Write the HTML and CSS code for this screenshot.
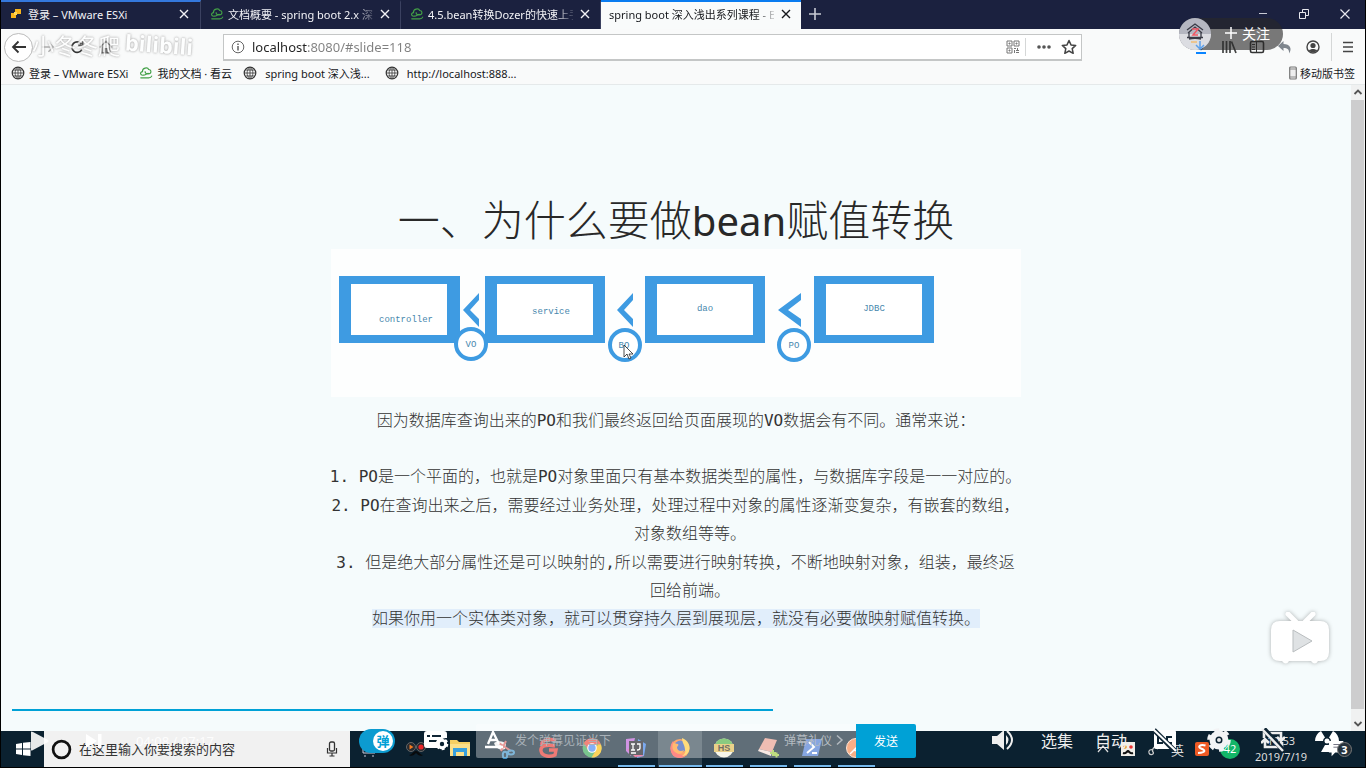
FILE: index.html
```html
<!DOCTYPE html>
<html lang="zh-CN">
<head>
<meta charset="utf-8">
<title>spring boot 深入浅出系列课程</title>
<link rel="stylesheet" href="styles.css">
</head>
<body>
<svg class="defs" aria-hidden="true">
  <symbol id="globe" viewBox="0 0 16 16"><circle cx="8" cy="8" r="6.6" fill="none" stroke="#333" stroke-width="1.4"/><path d="M8 1.4v13.2M1.4 8h13.2M2.6 4.6h10.8M2.6 11.4h10.8M8 1.4C3.6 5 3.6 11 8 14.6M8 1.4c4.400 3.600 4.400 9.600 0 13.200" fill="none" stroke="#444"/></symbol>
  <symbol id="cloud" viewBox="0 0 16 16"><path d="M5 10.500C1 11 .8 6.500 4 6.500 3.500 2 10 1 11 4c3.500 0 3.600 5-.5 5C8 9 7 8.500 7 6.500M5 10.500c3 0 3.500-2.500 6-2M2 13.500h9c2 0 3-.5 3.500-2" fill="none" stroke="#43a047" stroke-width="1.300" stroke-linecap="round"/></symbol>
  <symbol id="close" viewBox="0 0 12 12"><path d="M2 2l8 8M10 2l-8 8" stroke="currentColor" stroke-width="1.4" fill="none"/></symbol>
</svg>
<div class="screen">
  <header class="tabs">
    <div class="tab tab-first"><svg class="i12" viewBox="0 0 12 12"><path d="M5 1h6v5H5zM1 5h5v5H1z" fill="#f9b51b"/><path d="M4 4h3v3H4z" fill="#ffd75a"/></svg><span class="tab-title">登录 – VMware ESXi</span><button class="x" aria-label="关闭"><svg class="i12"><use href="#close"/></svg></button></div>
    <div class="tab"><svg class="i14"><use href="#cloud"/></svg><span class="tab-title fade">文档概要 - spring boot 2.x 深</span><button class="x" aria-label="关闭"><svg class="i12"><use href="#close"/></svg></button></div>
    <div class="tab"><svg class="i14"><use href="#cloud"/></svg><span class="tab-title fade">4.5.bean转换Dozer的快速上手</span><button class="x" aria-label="关闭"><svg class="i12"><use href="#close"/></svg></button></div>
    <div class="tab active"><span class="tab-title fade">spring boot 深入浅出系列课程 - B</span><button class="x" aria-label="关闭"><svg class="i12"><use href="#close"/></svg></button></div>
    <button class="newtab" aria-label="新标签页"><svg class="i14" viewBox="0 0 14 14"><path d="M7 1v12M1 7h12" stroke="#c8cad4" stroke-width="1.6"/></svg></button>
    <div class="wincontrols">
      <button aria-label="最小化"><svg class="i12" viewBox="0 0 12 12"><path d="M2 5.500h8" stroke="#c8cad4"/></svg></button>
      <button aria-label="还原"><svg class="i12" viewBox="0 0 12 12"><path d="M1.500 4.500h6v6h-6zM4.500 4V1.500h6v6H8" fill="none" stroke="#e8e8ee"/></svg></button>
      <button aria-label="关闭窗口"><svg class="i12" viewBox="0 0 12 12"><path d="M1.500 1.500l9 9M10.500 1.500l-9 9" stroke="#e8e8ee" stroke-width="1.200"/></svg></button>
    </div>
  </header>

  <nav class="toolbar">
    <div class="navleft">
      <button class="back" aria-label="后退"><svg class="i16" viewBox="0 0 16 16"><path d="M15 8H2M7.500 2.500L2 8l5.500 5.500" fill="none" stroke="#333" stroke-width="1.800"/></svg></button>
      <button class="tool" aria-label="前进"><svg class="i14" viewBox="0 0 16 16"><path d="M1 8h13M8.500 2.500L14 8l-5.500 5.500" fill="none" stroke="#aaa" stroke-width="1.600"/></svg></button>
      <button class="tool" aria-label="刷新"><svg class="i14" viewBox="0 0 16 16"><path d="M13.500 11A6 6 0 1 1 13 4.500M14.500 1v5h-5" fill="none" stroke="#333" stroke-width="2"/></svg></button>
      <button class="tool" aria-label="主页"><svg class="i14" viewBox="0 0 16 16"><path d="M1 8.500L8 1.500l7 7M3.500 7v7.500H7V10h2v4.500h3.500V7" fill="none" stroke="#333" stroke-width="1.600"/></svg></button>
    </div>
    <div class="urlbar">
      <svg class="i14" viewBox="0 0 14 14"><circle cx="7" cy="7" r="5.800" fill="none" stroke="#666"/><path d="M7 6v4.500M7 3.500v1.500" stroke="#555" stroke-width="1.400"/></svg>
      <input class="url" aria-label="地址" value="localhost:8080/#slide=118">
      <svg class="i14" viewBox="0 0 14 14"><path d="M1 1h5v5H1zM8 1h5v5H8zM1 8h5v5H1zM3 3h1v1H3zM10 3h1v1h-1zM3 10h1v1H3zM8 8.500h2M11.500 8v3M8.500 10v3M10 10.500h3M10 12.500h3" fill="none" stroke="#777"/></svg>
      <span class="sep"></span>
      <svg class="i16" viewBox="0 0 16 16"><g fill="#555"><circle cx="3" cy="8" r="1.800"/><circle cx="8" cy="8" r="1.800"/><circle cx="13" cy="8" r="1.800"/></g></svg>
      <svg class="i16 star" viewBox="0 0 16 16"><path d="M8 1.500l2 4.400 4.700.5-3.500 3.200 1 4.700L8 12l-4.200 2.300 1-4.700L1.300 6.400 6 5.900z" fill="none" stroke="#444" stroke-width="1.500" stroke-linejoin="round"/></svg>
    </div>
    <div class="navright">
      <button class="tool" aria-label="下载"><svg class="i16" viewBox="0 0 16 16"><path d="M8 1v9M4 6l4 4.500L12 6" fill="none" stroke="#5ba0ec" stroke-width="1.500"/><path d="M3 14h10" stroke="#0a84ff" stroke-width="2"/></svg></button>
      <button class="tool" aria-label="我的书库"><svg class="i16" viewBox="0 0 16 16"><path d="M2 2v12M5.500 2v12M9 2v12M10.500 2.500L15 14" stroke="#444" stroke-width="1.700"/></svg></button>
      <button class="tool" aria-label="侧栏"><svg class="i16" viewBox="0 0 16 16"><rect x="1.500" y="2.500" width="13" height="11" rx="1.500" fill="none" stroke="#333" stroke-width="1.600"/><path d="M7.500 3v10M3 5.500h3M3 8h3M3 10.500h3" stroke="#333"/></svg></button>
      <button class="tool" aria-label="撤销"><svg class="i16" viewBox="0 0 16 16"><path d="M6.500 2L1 7l5.500 5V9c4 0 6 1.500 5.500 5.500C15.500 10 13 5 6.500 5z" fill="#7f868e"/></svg></button>
      <button class="tool" aria-label="账户"><svg class="i16" viewBox="0 0 16 16"><circle cx="8" cy="8" r="6" fill="none" stroke="#444" stroke-width="1.400"/><circle cx="8" cy="6.500" r="2.600" fill="#444"/><path d="M3.800 11.500c2-2 6.400-2 8.400 0C10 14 6 14 3.800 11.500z" fill="#444"/></svg></button>
      <span class="sep tall"></span>
      <button class="tool" aria-label="菜单"><svg class="i14" viewBox="0 0 14 14"><path d="M2 2.500h10M2 7h10M2 11.500h10" stroke="#444" stroke-width="1.700"/></svg></button>
    </div>
  </nav>

  <div class="bookmarks">
    <a href="#"><svg class="i14"><use href="#globe"/></svg>登录 – VMware ESXi</a>
    <a href="#"><svg class="i14"><use href="#cloud"/></svg>我的文档 · 看云</a>
    <a href="#" class="wide"><svg class="i14"><use href="#globe"/></svg>spring boot 深入浅...</a>
    <a href="#" class="wide"><svg class="i14"><use href="#globe"/></svg>http://localhost:888...</a>
    <a href="#" class="mobile"><svg class="phone" viewBox="0 0 8 14"><rect x=".7" y="1" width="6.600" height="12" rx="1" fill="#eee" stroke="#777" stroke-width="1.200"/><path d="M1 3h6M1 11h6" stroke="#888"/></svg>移动版书签</a>
  </div>

  <main class="viewport">
    <article class="slide">
      <h1>一、为什么要做<span class="latin">bean</span>赋值转换</h1>
      <svg class="diagram" viewBox="0 0 690 148" role="img" aria-label="分层对象转换">
        <rect width="690" height="148" fill="#fdfefe"/>
        <g fill="#fff" stroke="#3e9be2">
          <path d="M8 27h121v67H8zM154 27h120v67H154zM314 27h120v67H314zM483 27h120v67H483z" fill="#3e9be2" stroke="none"/>
          <path d="M20 35h96v51H20zM166 35h96v51h-96zM326 35h96v51h-96zM495 35h96v51h-96z" stroke="none"/>
          <path d="M132 61l16-17v7l-9 10 9 9v8zM286 61l16-17v7l-9 10 9 9v8zM447 61l23-17v7l-13 10 13 9v8z" fill="#3e9be2" stroke="none"/>
          <g stroke-width="4"><circle cx="140" cy="95" r="15"/><circle cx="294" cy="96" r="15"/><circle cx="463" cy="96" r="15"/></g>
        </g>
        <g class="labels"><text x="75" y="73">controller</text><text x="220" y="65">service</text><text x="374" y="62">dao</text><text x="543" y="62">JDBC</text><text x="140" y="98">VO</text><text x="293" y="99">BO</text><text x="463" y="99">PO</text></g>
        <path d="M293 96v12l3-3 2 5 2-1-2-4h4z" fill="#fff" stroke="#222" stroke-width=".8"/>
      </svg>
      <p class="lead">因为数据库查询出来的PO和我们最终返回给页面展现的VO数据会有不同。通常来说：</p>
      <ol>
        <li>PO是一个平面的，也就是PO对象里面只有基本数据类型的属性，与数据库字段是一一对应的。</li>
        <li>PO在查询出来之后，需要经过业务处理，处理过程中对象的属性逐渐变复杂，有嵌套的数组，<br>对象数组等等。</li>
        <li>但是绝大部分属性还是可以映射的,所以需要进行映射转换，不断地映射对象，组装，最终返<br>回给前端。</li>
      </ol>
      <p><mark>如果你用一个实体类对象，就可以贯穿持久层到展现层，就没有必要做映射赋值转换。</mark></p>
    </article>
    <div class="scrollbar">
      <svg viewBox="0 0 14 14"><path d="M3.500 9L7 5.500 10.500 9" fill="none" stroke="#555" stroke-width="1.800"/></svg>
      <div class="thumb"></div>
      <svg viewBox="0 0 14 14"><path d="M3.500 5L7 8.500 10.500 5" fill="none" stroke="#555" stroke-width="1.800"/></svg>
    </div>
  </main>

  <footer class="taskbar">
    <button class="start" aria-label="开始"><svg class="i16" viewBox="0 0 16 16"><path d="M1 3l6-1v5.500H1zM8 1.800L15.500 1v6.500H8zM1 8.500h6V14l-6-1zM8 8.500h7.500V15L8 14.200z" fill="#fff"/></svg></button>
    <label class="search"><svg class="cortana" viewBox="0 0 20 20"><circle cx="10" cy="10" r="8" fill="none" stroke="#111" stroke-width="2.600"/></svg><input placeholder="在这里输入你要搜索的内容" aria-label="搜索"><svg class="i16" viewBox="0 0 16 16"><rect x="5.500" y="1" width="5" height="9" rx="1.500" fill="none" stroke="#333" stroke-width="1.300"/><path d="M3.500 7v5h9V7M8 12v3M5.500 15h5" fill="none" stroke="#333" stroke-width="1.200"/></svg></label>
    <div class="apps">
      <button class="app" aria-label="任务视图"><svg viewBox="0 0 22 22"><path d="M2 5v11h12V5zM17 5v11M4 18v2M12 18v2" fill="none" stroke="#ccd" /></svg></button>
      <button class="app" aria-label="播放器"><svg viewBox="0 0 22 22"><circle cx="6" cy="10" r="4.500" fill="#272b30" stroke="#666"/><path d="M4.500 7.500l4 2.500-4 2.500z" fill="#f47b20"/><circle cx="16" cy="10" r="4.500" fill="#272b30" stroke="#666"/><circle cx="16" cy="10" r="2.600" fill="#e8262a"/><path d="M4 18c3 2 5 0 7-2 2 2 4 4 7 2-3 0-4-4-7-4s-4 4-7 4" fill="#080a0c"/></svg></button>
      <button class="app" aria-label="资源管理器"><svg viewBox="0 0 22 22"><path d="M1 3h7l2 2h11v14H1z" fill="#f5cf63"/><path d="M1 7h20v12H1z" fill="#fbe08a"/><path d="M4 11h14v8h-3v-4H7v4H4z" fill="#38a0dc"/></svg></button>
      <button class="app" aria-label="截图"><svg viewBox="0 0 22 22"><path d="M1 6c4-3 10-2 12 1l-1 5c-4 2-9 0-11-6z" fill="#eee"/><path d="M6 6l12 8M13 4l-5 10" stroke="#d9625f" stroke-width="2"/><ellipse cx="12" cy="18" rx="2.200" ry="3.300" fill="none" stroke="#3b8ec4" stroke-width="2"/><ellipse cx="18" cy="15.500" rx="3" ry="2" fill="none" stroke="#3b8ec4" stroke-width="2"/></svg></button>
      <button class="app" aria-label="词典"><svg viewBox="0 0 22 22"><path d="M19 3.500C10 1 4 4 5 8M18 9C9 7 3 9 4 14c1 6 10 6 14 4l1-5h-7" fill="none" stroke="#e6342b" stroke-width="3.400"/></svg></button>
      <button class="app" aria-label="Chrome"><svg viewBox="0 0 22 22"><circle cx="11" cy="11" r="9.500" fill="#34a853"/><path d="M2.800 6A9.500 9.500 0 0 1 20 7.500h-9L7 13z" fill="#ea4335"/><path d="M20 7.500A9.500 9.500 0 0 1 10.500 20.500L15 13V7.500z" fill="#fbbc05"/><circle cx="11" cy="11" r="4.800" fill="#fff"/><circle cx="11" cy="11" r="3.700" fill="#4285f4"/></svg></button>
      <button class="app open" aria-label="IntelliJ IDEA"><svg viewBox="0 0 22 22"><path d="M1 2l9-1-4 18-5-5z" fill="#b85bd6"/><path d="M13 2l8 5-2 12-7 2z" fill="#367de8"/><path d="M2 12l8 8 9-1z" fill="#f0457a"/><rect x="4" y="4" width="14" height="14" fill="#16151d"/><path d="M6 7h4M8 7v6M6 13h4M12 7h3v4q0 2-3 2M6 16h5" fill="none" stroke="#fff" stroke-width="1.300"/></svg></button>
      <button class="app open current" aria-label="Firefox"><svg viewBox="0 0 22 22"><circle cx="11" cy="11.500" r="9.500" fill="#ff7a1c"/><path d="M4 4C0 9 1 17 6 20c5 2 9 1 12-3-6 2-12 0-12-6z" fill="#ff4a45"/><circle cx="11.500" cy="9.500" r="6" fill="#2f55b5"/><path d="M13 1c6 2 9 8 7 13-1 3-4 5-7 5 3-2 4-4 3-6 0-5-3-7-3-12z" fill="#ffc936"/><path d="M4 6c2 0 3 1 5 1 1 1 0 2-1 3 0 4 4 5 7 3-1 4-6 5-9 2-3-2-3-6-2-9z" fill="#ff9526"/></svg></button>
      <button class="app open" aria-label="HeidiSQL"><svg viewBox="0 0 22 22"><circle cx="11" cy="11" r="9.500" fill="#f3f1df"/><path d="M2 8a9.500 9.500 0 0 1 18 0z" fill="#4caf3d"/><rect x="1" y="7" width="20" height="8" fill="#dfb84b"/><text x="11" y="14" text-anchor="middle" class="hs">HS</text></svg></button>
      <button class="app open" aria-label="编辑器"><svg viewBox="0 0 22 22"><path d="M8 1l12 2-5 12L2 12z" fill="#e69a8b"/><path d="M2 12l13 3-1 4L1 14z" fill="#f5ddd5"/><path d="M13 16h6M16 13v6M17 18h5M19.500 15.500v5" stroke="#9cca3b" stroke-width="2"/></svg></button>
      <button class="app open" aria-label="终端"><svg viewBox="0 0 22 22"><path d="M5 2h16l-4 17H1z" fill="#4577d2"/><path d="M8 5l5 5-7 6M11 16h5" fill="none" stroke="#fff" stroke-width="2"/></svg></button>
      <button class="app open" aria-label="Postman"><svg viewBox="0 0 22 22"><circle cx="11" cy="11" r="9.500" fill="#f58345" stroke="#ffd7bf"/><path d="M5 17l6-6 5-5M9 13l3 1 5-8" fill="none" stroke="#fff" stroke-width="1.500"/></svg></button>
    </div>
    <div class="tray">
      <svg class="i14" viewBox="0 0 14 14"><path d="M2 10l5-6 5 6" fill="none" stroke="#ddd" stroke-width="1.200"/></svg>
      <svg class="i14" viewBox="0 0 14 14"><rect width="14" height="14" fill="#f0eee8"/><circle cx="4" cy="5" r="1.800" fill="#e5912e"/><circle cx="10" cy="5" r="1.800" fill="#e33"/><path d="M2 11c3 1 3-1 5-2 2 1 2 3 5 2" fill="none" stroke="#111" stroke-width="2"/></svg>
      <svg class="i14" viewBox="0 0 14 14"><path d="M13 2C9 3 5 8 7 10s-3 4-4 1 2-4 4-3M9 5l3 2" fill="none" stroke="#ccc" stroke-width="1.200"/></svg>
      <span class="ime">英</span>
      <svg class="i14" viewBox="0 0 14 14"><rect width="14" height="14" rx="2" fill="#ee5a24"/><path d="M10.500 3.500C5 2 2 5 6 6.500s6 4-3 4.500" fill="none" stroke="#fff" stroke-width="2"/></svg>
      <span class="score">42</span>
      <time class="clock"><span>10:53</span><span>2019/7/19</span></time>
      <button class="notice" aria-label="通知"><svg viewBox="0 0 22 20"><path d="M2 1h16v13H9l-4 4v-4H2z" fill="#fff"/><path d="M7 5h9M7 8h9" stroke="#667"/></svg><span class="count">3</span></button>
    </div>
  </footer>

  <div class="watermark"><span>小冬冬爬</span><b>bilibili</b></div>
  <div class="follow">
    <svg class="avatar" viewBox="0 0 32 32"><circle cx="16" cy="16" r="16" fill="#b5b7c1"/><path d="M0 16a16 16 0 0 0 32 0z" fill="#f6f7f8" opacity=".6"/><path d="M8 12l8-6 8 6M9 15l7-6 7 6M10 14v5M22 14v5M8 19.500h16M10 21c4-1 8-1 12 0" fill="none" stroke="#393b46" stroke-width="1.300"/><path d="M13 11h6l-5 6h5" fill="none" stroke="#ef5965" stroke-width="1.500"/><path d="M12 24h6" stroke="#f3bd73" stroke-width="1.500"/><path d="M21 23v8M17 27l4 4 4-4" fill="none" stroke="#5ba0ec" stroke-width="1.500"/></svg>
    <button><svg class="i14" viewBox="0 0 14 14"><path d="M7 1v12M1 7h12" stroke="#fff" stroke-width="1.500"/></svg>关注</button>
  </div>
  <button class="tv" aria-label="播放"><svg viewBox="0 0 60 54"><path d="M18 2l8 8M43 2l-8 8" stroke="#fff" stroke-width="5" stroke-linecap="round"/><path d="M10 9h40q9 0 9 9v22q0 9-9 9h-2q-3 5-7 0H19q-3 5-7 0h-2q-9 0-9-9V18q0-9 9-9z" fill="#fff"/><path d="M23 18l19 11-19 11z" fill="#dfe2e4" stroke="#b9bdbf" stroke-linejoin="round"/></svg></button>
  <div class="progress"><div class="played" style="width:56.7%"></div></div>
  <section class="player">
    <div class="playback">
      <button class="play" aria-label="播放"><svg viewBox="0 0 20 20"><path d="M1 1q0-1 2 0l15 8q1 1 0 2L3 19q-2 1-2 0z" fill="#fff"/></svg></button>
      <button class="next" aria-label="下一个"><svg class="i16" viewBox="0 0 16 16"><path d="M0 1l11 7-11 7zM12 1h3.500v14H12z" fill="#fff"/></svg></button>
      <span class="time">04:08 / 07:17</span>
    </div>
    <button class="danmaku" aria-label="弹幕开关"><span>弹</span></button>
    <button class="dmset" aria-label="弹幕设置"><svg viewBox="0 0 26 22"><path d="M4 1h17q3 0 3 3v4q-8-1-9 10H4q-3 0-3-3V4q0-3 3-3z" fill="#fff"/><path d="M4 6h3M9 6h9M6 11h8" stroke="#102635" stroke-width="2"/><circle cx="19" cy="14" r="3.700" fill="none" stroke="#fff" stroke-width="3"/><circle cx="19" cy="14" r="5.300" fill="none" stroke="#fff" stroke-width="2" stroke-dasharray="2.800 2.750"/></svg></button>
    <div class="sendbox">
      <svg class="font-icon" viewBox="0 0 20 20"><path d="M4 14L9 2l6 12M6 10h7M1 17h18" fill="none" stroke="#fff" stroke-width="2.300"/></svg>
      <input placeholder="发个弹幕见证当下" aria-label="弹幕">
      <a href="#">弹幕礼仪<svg class="i12" viewBox="0 0 12 12"><path d="M3 1.500L8 6l-5 4.500" fill="none" stroke="currentColor" stroke-width="1.500"/></svg></a>
    </div>
    <button class="send">发送</button>
    <div class="controls">
      <button aria-label="音量"><svg viewBox="0 0 24 24"><path d="M1 8h5l7-6v20l-7-6H1zM15 7q5 5 0 10z" fill="#eee"/><path d="M16 3q10 9 0 18" fill="none" stroke="#eee" stroke-width="2"/></svg></button>
      <button>选集</button>
      <button>自动</button>
      <button aria-label="字幕"><svg viewBox="0 0 24 24"><rect x="1" y="2" width="22" height="19" rx="2" fill="#fff"/><path d="M10 9H5v6h5M19 9h-5v6h5" fill="none" stroke="#102635" stroke-width="2"/><path d="M1 2l21 21" stroke="#102635" stroke-width="5"/><path d="M0 1l23 22" stroke="#fff" stroke-width="2"/></svg></button>
      <button aria-label="设置"><svg viewBox="0 0 24 24"><circle cx="12" cy="12" r="6.500" fill="none" stroke="#f3f4f5" stroke-width="6"/><circle cx="12" cy="12" r="9.800" fill="none" stroke="#f3f4f5" stroke-width="4" stroke-dasharray="5 5.260"/><circle cx="12" cy="12" r="2" fill="#e8e8e8"/></svg></button>
      <button aria-label="循环"><svg viewBox="0 0 24 24"><path d="M3 10V5h17v12M21 14v5H4v-6M0 15l4-4 4 4M16 9l4 4 4-4" fill="none" stroke="#eee" stroke-width="2.600"/><path d="M3 1l20 22" stroke="#102635" stroke-width="5"/><path d="M1 1l21 22" stroke="#eee" stroke-width="2.500"/></svg></button>
      <button aria-label="宽屏"><svg viewBox="0 0 24 24"><circle cx="12" cy="13" r="2.500" fill="#fff"/><path d="M0 13A12 12 0 0 1 6 3l4 6.500A4 4 0 0 0 8 13zM24 13A12 12 0 0 0 18 3l-4 6.500a4 4 0 0 1 2 3.500zM10 17h4l4 7H6z" fill="#fff"/></svg></button>
    </div>
  </section>
</div>
</body>
</html>
```
FILE: styles.css
```css
* { box-sizing: border-box; }
body { margin: 0; font-family: "Noto Sans", "Noto Sans CJK SC", sans-serif; font-size: 11px; color: #222; background: #000; }
button { border: 0; padding: 0; margin: 0; background: none; color: inherit; font: inherit; display: flex; align-items: center; justify-content: center; }
input { border: 0; padding: 0; outline: 0; background: none; font: inherit; min-width: 0; }
a { color: inherit; text-decoration: none; }
p, h1, ol { margin: 0; padding: 0; }
svg { display: block; flex: none; }
.defs { position: absolute; width: 0; height: 0; }
.i12 { width: 12px; height: 12px; }
.i14 { width: 14px; height: 14px; }
.i16 { width: 16px; height: 16px; }
.screen { position: relative; min-height: 100vh; display: flex; flex-direction: column; overflow: hidden; border: 1px solid #000; border-top: 0; }

.tabs { display: flex; height: 29px; background: #1b213f; color: #f2f2f6; }
.tab { flex: 0 1 200px; min-width: 0; display: flex; align-items: center; gap: 4px; padding: 0 7px 3px 9px; border-top: 2px solid transparent; border-right: 1px solid #3b4160; }
.tab-first { border-top-color: #3478dd; }
.tab-first .i12:first-child { margin-right: 2px; }
.tab.active { background: #f9fbfb; color: #16181c; border-top-color: #0a7cf0; border-right: 0; padding-left: 8px; }
.tab-title { flex: 1; min-width: 0; white-space: nowrap; }
.fade { mask-image: linear-gradient(to right, #000 88%, rgba(0, 0, 0, .2)); }
.x { width: 16px; height: 16px; }
.newtab { width: 28px; padding-bottom: 1px; }
.wincontrols { margin-left: auto; display: flex; padding-bottom: 2px; }
.wincontrols button { width: 41px; }

.toolbar { display: flex; align-items: center; height: 36px; background: #f9fafa; }
.navleft { flex: 0 0 222px; display: flex; gap: 1px; padding-left: 3px; }
.back { width: 29px; height: 29px; border: 1px solid #bbb; border-radius: 50%; background: #fff; }
.tool { width: 28px; height: 28px; }
.urlbar { flex: 1; min-width: 0; display: flex; align-items: center; height: 27px; padding: 0 4px 0 7px; background: #fff; border: 1px solid #c4c6c6; border-bottom-width: 2px; }
.url { flex: 1; margin-left: 7px; font-size: 13px; color: transparent; background: linear-gradient(to right, #222 56px, #808080 56px); background-clip: text; -webkit-background-clip: text; }
.sep { width: 1px; height: 18px; margin: 0 10px 0 5px; background: #d5d7d7; }
.star { margin-left: 9px; }
.sep.tall { height: 28px; margin: 0 2px 0 4px; }
.navright { flex: 0 1 283px; display: flex; align-items: center; justify-content: flex-end; padding-right: 3px; }

.bookmarks { display: flex; align-items: center; height: 20px; padding: 0 10px 3px; gap: 11px; background: #f9fafa; border-bottom: 1px solid #e5e9ea; color: #16181c; white-space: nowrap; }
.bookmarks a { display: flex; align-items: center; gap: 4px; }
.bookmarks .wide { gap: 8px; margin-right: 4px; }
.bookmarks .mobile { margin-left: auto; gap: 3px; }
.phone { width: 8px; height: 14px; }

.viewport { flex: 1; display: flex; background: #f5fbfc; }
.slide { flex: 1; min-width: 0; display: flex; flex-direction: column; align-items: center; padding: 108px 0 92px; color: #333; font-family: "DejaVu Sans Mono", "Noto Sans CJK SC", monospace; font-size: 16px; font-weight: 300; line-height: 28px; text-align: center; white-space: nowrap; }
.slide h1 { font-size: 42px; font-weight: 300; line-height: 55px; color: #282828; }
.latin { font-family: "Noto Sans", sans-serif; font-size: 40px; font-weight: 400; }
.diagram { width: 100%; max-width: 690px; margin-bottom: 10px; }
.labels { font-family: "Liberation Mono", monospace; font-size: 9px; fill: #4787ad; text-anchor: middle; }
.lead { margin-bottom: 28px; }
.slide ol { display: flex; flex-direction: column; align-items: center; padding-left: 28px; gap: 1px; }
mark { background: #e1eefb; color: inherit; }
.scrollbar { width: 14px; display: flex; flex-direction: column; background: #f0f1f1; }
.thumb { flex: 1; width: 13px; margin: 1px 0 8px; background: #cdcdce; }

.taskbar { display: flex; height: 36px; background: #0b2130; color: #ddd; }
.start { width: 43px; }
.search { flex: 0 0 306px; display: flex; align-items: center; gap: 7px; padding: 0 10px 0 7px; background: #f1f1f1; }
.search input { flex: 1; font-size: 13px; color: #333; }
.search input::placeholder { color: #333; opacity: 1; }
.cortana { width: 21px; height: 21px; }
.apps { display: flex; }
.app { width: 44px; border-bottom: 2px solid transparent; }
.app svg { width: 22px; height: 22px; }
.app.open { background: linear-gradient(#76b9ed, #76b9ed) center bottom / 37px 2px no-repeat border-box; }
.app.current { background: linear-gradient(#76b9ed, #76b9ed) center bottom / 43px 2px no-repeat border-box, #334754; }
.hs { font: bold 9px "Liberation Sans", sans-serif; fill: #221; }
.tray { margin-left: auto; display: flex; align-items: center; gap: 11px; padding-right: 13px; }
.ime { font-size: 13px; }
.score { width: 20px; height: 20px; border-radius: 50%; background: #13b568; color: #fff; line-height: 20px; text-align: center; }
.clock { display: flex; flex-direction: column; align-items: center; width: 60px; line-height: 16px; }
.notice { position: relative; width: 30px; }
.notice svg { width: 20px; height: 18px; }
.count { position: absolute; right: 0; bottom: 1px; width: 15px; height: 15px; border: 1px solid #777; border-radius: 50%; background: #26323b; color: #fff; font-size: 11px; font-weight: 700; line-height: 13px; }

.watermark { position: absolute; left: 31px; top: 27px; display: flex; align-items: center; gap: 5px; height: 34px; color: #fff; font-size: 22px; text-shadow: 0 0 2px #999, 0 0 3px #bbb; opacity: .8; white-space: nowrap; }
.watermark b { font-family: "Open Sans", sans-serif; font-size: 22px; transform: rotate(4deg); }
.follow { position: absolute; right: 82px; top: 18px; display: flex; width: 104px; height: 32px; border-radius: 16px; background: rgba(40, 40, 40, .62); }
.avatar { width: 32px; height: 32px; }
.follow button { flex: 1; gap: 4px; padding-bottom: 2px; color: #fff; font-size: 14px; }
.tv { position: absolute; right: 35px; bottom: 101px; filter: drop-shadow(0 0 2px rgba(0, 0, 0, .3)); }
.tv svg { width: 60px; height: 54px; }
.progress { position: absolute; left: 11px; right: 11px; bottom: 56px; height: 2px; }
.played { height: 100%; background: #00a1d6; }
.player { position: absolute; left: 0; right: 0; bottom: 9px; height: 34px; display: flex; align-items: center; color: #eee; }
.playback { flex: 0 0 358px; display: flex; align-items: center; color: rgba(255, 255, 255, .9); }
.play { margin-left: 29px; opacity: .9; }
.play svg { width: 20px; height: 20px; }
.next { margin-left: 36px; }
.time { margin-left: 34px; font-size: 13px; }
.danmaku { width: 36px; height: 24px; justify-content: flex-end; border-radius: 12px; background: #0c9bd0; }
.danmaku span { width: 20px; height: 20px; margin-right: 2px; border-radius: 50%; background: #fff; color: #00a1d6; font-size: 13px; font-weight: 700; line-height: 20px; }
.dmset { margin: 0 27px 0 28px; }
.dmset svg { width: 26px; height: 22px; }
.sendbox { flex: 1; min-width: 0; height: 34px; display: flex; align-items: center; padding: 0 10px 2px 8px; border-radius: 2px 0 0 2px; background: rgba(255, 255, 255, .35); color: #b3bac0; font-size: 12px; }
.font-icon { width: 20px; height: 20px; }
.sendbox input { flex: 1; margin-left: 11px; color: #fff; }
.sendbox input::placeholder { color: #a9b2b9; opacity: 1; }
.sendbox a { display: flex; align-items: center; gap: 2px; }
.send { width: 60px; height: 34px; padding-bottom: 1px; border-radius: 0 2px 2px 0; background: #00a1d6; color: #fff; font-size: 12px; }
.controls { flex: 0 0 449px; display: flex; justify-content: flex-end; padding-right: 11px; font-size: 16px; }
.controls button { width: 54px; height: 34px; padding-bottom: 3px; }
.controls svg { width: 24px; height: 24px; }
```
